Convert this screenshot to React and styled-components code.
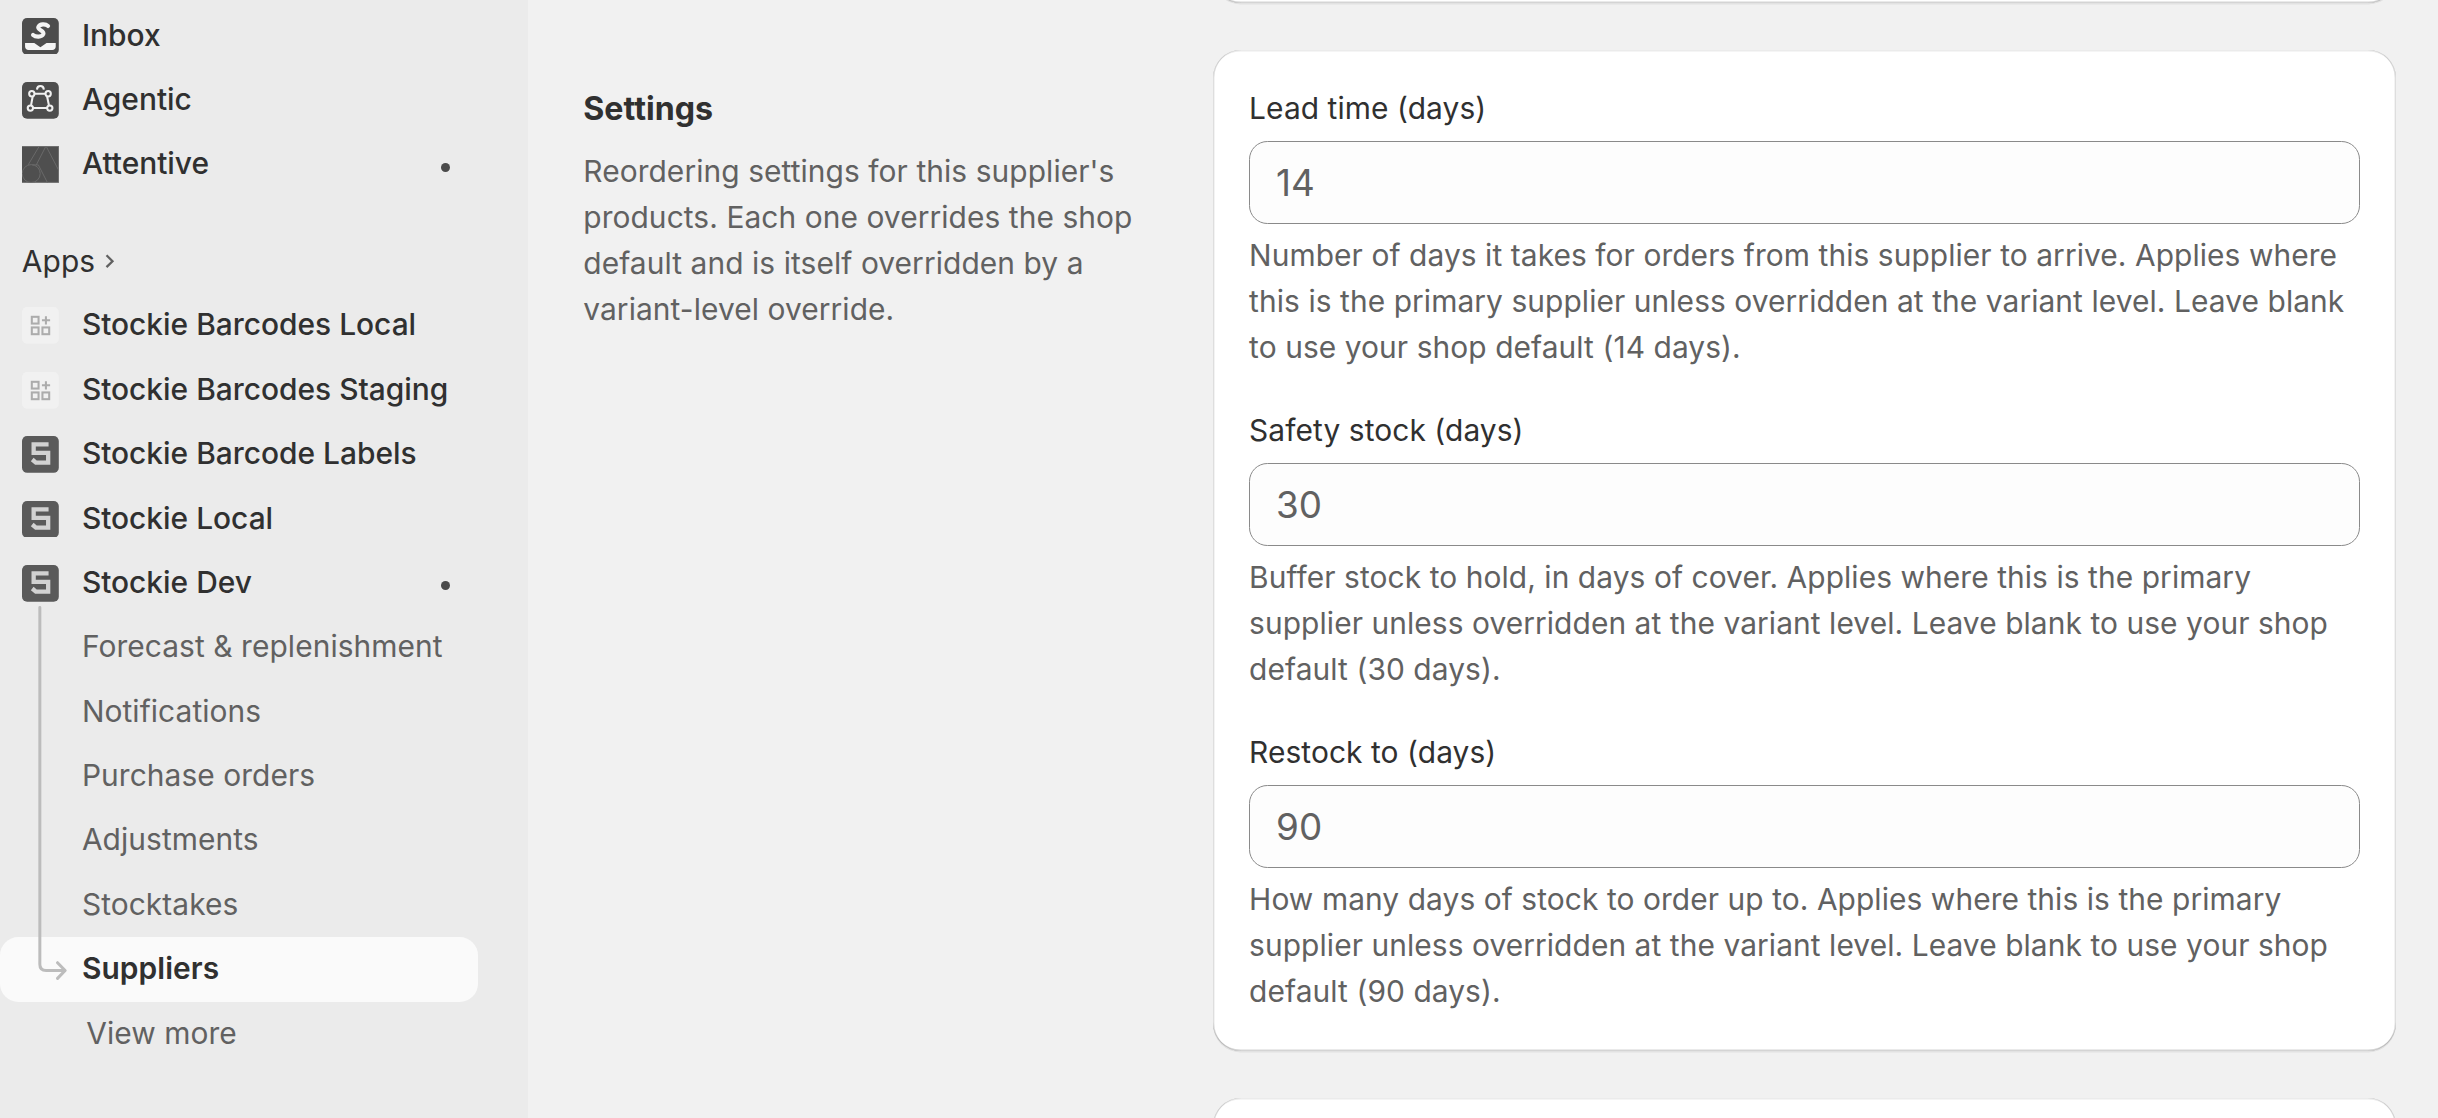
import React from "react";
import styled, { createGlobalStyle } from "styled-components";

const Global = createGlobalStyle`
  html, body { margin: 0; padding: 0; overflow: hidden; background: #f1f1f1; }
  #root { zoom: 2.3; }
  * { box-sizing: border-box; }
`;

const Page = styled.div`
  display: grid;
  grid-template-columns: 229.6px 1fr;
  width: 1060px;
  height: 486.1px;
  overflow: hidden;
  font-family: Inter, "Noto Sans", sans-serif;
  font-size: 13px;
  line-height: 20px;
  font-weight: 420;
  letter-spacing: 0.035px;
  color: #303030;
`;

const Sidebar = styled.nav`
  background: #ebebeb;
  padding-top: 1.65px;
  display: flex;
  flex-direction: column;
`;

const NavGroup = styled.div`
  display: flex;
  flex-direction: column;
`;

const AppsHeader = styled.div`
  display: flex;
  align-items: center;
  height: 28px;
  margin-top: 14px;
  padding-left: 9.5px;
  gap: 2.4px;
  color: #303030;
`;

const NavRow = styled.div`
  display: flex;
  align-items: center;
  height: 28px;
  padding-left: 9.6px;
  gap: 10px;
  width: 208px;
  font-weight: 490;
  letter-spacing: 0;
  color: #303030;
`;

const NavIcon = styled.svg`
  width: 16px;
  height: 16px;
  flex: none;
  display: block;
`;

const Label = styled.span`
  flex: 1;
  white-space: nowrap;
  padding-bottom: 1.2px;
`;

const Dot = styled.span`
  width: 3.9px;
  height: 3.9px;
  border-radius: 50%;
  background: #4a4a4a;
  margin: 2px 0 0 0;
  position: relative;
  left: -12.3px;
`;

const SubNav = styled.div`
  position: relative;
  display: flex;
  flex-direction: column;
`;

const SubRow = styled.div`
  display: flex;
  align-items: center;
  height: 28px;
  width: 208px;
  padding-left: ${(p) => (p.$more ? "37.5px" : "35.6px")};
  padding-bottom: 1.2px;
  color: ${(p) => (p.$active ? "#303030" : "#616161")};
  font-weight: ${(p) => (p.$active ? 600 : 420)};
  background: ${(p) => (p.$active ? "#fafafa" : "transparent")};
  border-radius: ${(p) => (p.$active ? "8px" : "0")};
  white-space: nowrap;
`;

const Connector = styled.svg`
  position: absolute;
  left: 15px;
  top: -4px;
  width: 16px;
  height: 164px;
`;

const Main = styled.main`
  padding: 0 18.3px 0 24px;
  background: #f1f1f1;
`;

const Card = styled.div`
  background: #fff;
  border-radius: 12px;
  padding: 15.2px 15.7px 16.1px;
  display: flex;
  flex-direction: column;
  gap: 16px;
  box-shadow:
    0 0.6px 0 rgba(26, 26, 26, 0.07),
    inset 0 -0.6px 0 rgba(0, 0, 0, 0.17),
    inset 0.6px 0 0 rgba(0, 0, 0, 0.13),
    inset -0.6px 0 0 rgba(0, 0, 0, 0.13),
    inset 0 0.6px 0 rgba(0, 0, 0, 0.08);
`;

const PrevCard = styled(Card)`
  margin-left: 273.8px;
  margin-top: -38.6px;
  height: 40px;
`;

const Section = styled.section`
  display: grid;
  grid-template-columns: 257.8px 1fr;
  column-gap: 16px;
  margin-top: 20.3px;
`;

const Intro = styled.div`
  padding-top: 15.7px;
  display: flex;
  flex-direction: column;
  gap: 7px;
`;

const Heading = styled.h2`
  margin: 0;
  font-size: 14px;
  line-height: 20px;
  font-weight: 650;
  letter-spacing: 0;
  color: #303030;
`;

const IntroText = styled.p`
  margin: 0;
  color: #616161;
  max-width: 242px;
`;

const NextCard = styled(Card)`
  height: 60px;
  margin-top: 20.3px;
`;

const NextRow = styled.div`
  display: grid;
  grid-template-columns: 257.8px 1fr;
  column-gap: 16px;
`;

const Field = styled.div`
  display: flex;
  flex-direction: column;
`;

const FieldLabel = styled.label`
  color: #303030;
  margin-bottom: 4.6px;
`;

const NumberInput = styled.input`
  display: block;
  width: 100%;
  height: 36px;
  padding: 0 11.3px;
  border: 0.66px solid #8a8a8a;
  border-radius: 8px;
  background: #fdfdfd;
  font: inherit;
  font-size: 16px;
  font-weight: 420;
  color: #616161;
  outline: none;
`;

const Help = styled.div`
  margin-top: 3.4px;
  color: #616161;
`;

const IconBg = ({ fill = "#4d4d4d", r = 5 }) => <rect width="36" height="36" rx={r} fill={fill} />;

const InboxIcon = () => (
  <NavIcon viewBox="0 0 36 36">
    <IconBg />
    <path d="M25.5 7.8c-2.5-2.2-8-2.2-9.5 .9-1.4 3 6.5 3.8 4.8 7.2-1.4 3-7.5 3-10 .7" fill="none" stroke="#f4f4f4" strokeWidth="4" strokeLinecap="round" />
    <path d="M3 24.4h9l6 4.2 6-4.2h9V28c0 2-1.4 3.4-3.4 3.4H6.4C4.4 31.4 3 30 3 28z" fill="#f4f4f4" />
  </NavIcon>
);

const AgenticIcon = () => (
  <NavIcon viewBox="0 0 36 36">
    <IconBg />
    <path d="M12 11.5h11M10.5 14l-1.6 8.5M24.5 14l1.8 8.5M11 25.5h13.5" stroke="#f0f0f0" strokeWidth="2" fill="none" />
    <circle cx="9.6" cy="11.5" r="2.6" fill="none" stroke="#f0f0f0" strokeWidth="2" />
    <circle cx="25.6" cy="11.5" r="2.6" fill="none" stroke="#f0f0f0" strokeWidth="2" />
    <circle cx="8.2" cy="25.5" r="2.6" fill="none" stroke="#f0f0f0" strokeWidth="2" />
    <circle cx="27.2" cy="25.5" r="2.6" fill="none" stroke="#f0f0f0" strokeWidth="2" />
    <path d="M14.6 7.4c.4-4.6 6.4-4.6 6.8 0" fill="none" stroke="#f0f0f0" strokeWidth="2" />
  </NavIcon>
);

const AttentiveIcon = () => (
  <NavIcon viewBox="0 0 36 36">
    <rect width="36" height="36" fill="#4f4f4f" />
    <path d="M0 .4h36M0 35.6h36" stroke="#7a7a7a" strokeWidth=".8" />
    <path d="M6 18.5 17 0h6.5L36 24M14 18.5 23.5 0M10 18.5h6l9 17.5" fill="none" stroke="#6c6c6c" strokeWidth=".9" />
    <circle cx="9" cy="27" r="8.8" fill="none" stroke="#6c6c6c" strokeWidth=".9" />
  </NavIcon>
);

const GridIcon = () => (
  <NavIcon viewBox="0 0 36 36">
    <IconBg fill="#f1f1f1" />
    <g fill="none" stroke="#acacac" strokeWidth="2">
      <rect x="9.6" y="9.6" width="6.6" height="6.6" />
      <rect x="9.6" y="20" width="6.6" height="6.6" />
      <rect x="20" y="20" width="6.6" height="6.6" />
      <path d="M23.4 9v8M19.5 13h8" />
    </g>
  </NavIcon>
);

const StockieIcon = () => (
  <NavIcon viewBox="0 0 36 36">
    <IconBg fill="#5a5a5a" />
    <path d="M26 8.2H11.4v8.4h14.2V26H13.6L10 23" fill="none" stroke="#d2d2d2" strokeWidth="4.2" />
  </NavIcon>
);

const fields = [
  {
    label: "Lead time (days)",
    value: "14",
    help: "Number of days it takes for orders from this supplier to arrive. Applies where this is the primary supplier unless overridden at the variant level. Leave blank to use your shop default (14 days).",
  },
  {
    label: "Safety stock (days)",
    value: "30",
    help: "Buffer stock to hold, in days of cover. Applies where this is the primary supplier unless overridden at the variant level. Leave blank to use your shop default (30 days).",
  },
  {
    label: "Restock to (days)",
    value: "90",
    help: "How many days of stock to order up to. Applies where this is the primary supplier unless overridden at the variant level. Leave blank to use your shop default (90 days).",
  },
];

export default function App() {
  return (
    <>
      <Global />
      <Page>
        <Sidebar>
          <NavGroup>
            <NavRow><InboxIcon /><Label>Inbox</Label></NavRow>
            <NavRow><AgenticIcon /><Label>Agentic</Label></NavRow>
            <NavRow><AttentiveIcon /><Label>Attentive</Label><Dot /></NavRow>
          </NavGroup>
          <AppsHeader>
            Apps
            <svg width="8" height="8" viewBox="0 0 8 8">
              <path d="M2.4 1.4 5 4 2.4 6.6" fill="none" stroke="#616161" strokeWidth="1" />
            </svg>
          </AppsHeader>
          <NavGroup>
            <NavRow><GridIcon /><Label>Stockie Barcodes Local</Label></NavRow>
            <NavRow><GridIcon /><Label>Stockie Barcodes Staging</Label></NavRow>
            <NavRow><StockieIcon /><Label>Stockie Barcode Labels</Label></NavRow>
            <NavRow><StockieIcon /><Label>Stockie Local</Label></NavRow>
            <NavRow><StockieIcon /><Label>Stockie Dev</Label><Dot /></NavRow>
          </NavGroup>
          <SubNav>
            <SubRow>Forecast &amp; replenishment</SubRow>
            <SubRow>Notifications</SubRow>
            <SubRow>Purchase orders</SubRow>
            <SubRow>Adjustments</SubRow>
            <SubRow>Stocktakes</SubRow>
            <SubRow $active>Suppliers</SubRow>
            <SubRow $more>View more</SubRow>
            <Connector viewBox="0 0 16 164">
              <path d="M2.1 0.7V155.8q0 2.7 2.7 2.7H13M9.8 155.1 13.1 158.5 9.8 161.9" fill="none" stroke="#bcbcbc" strokeWidth="1.3" strokeLinecap="round" strokeLinejoin="round" />
            </Connector>
          </SubNav>
        </Sidebar>
        <Main>
          <PrevCard />
          <Section>
            <Intro>
              <Heading>Settings</Heading>
              <IntroText>
                Reordering settings for this supplier's products. Each one overrides the shop default and is itself overridden by a variant-level override.
              </IntroText>
            </Intro>
            <Card>
              {fields.map((f) => (
                <Field key={f.label}>
                  <FieldLabel>{f.label}</FieldLabel>
                  <NumberInput type="text" defaultValue={f.value} />
                  <Help>{f.help}</Help>
                </Field>
              ))}
            </Card>
          </Section>
          <NextRow>
            <div />
            <NextCard />
          </NextRow>
        </Main>
      </Page>
    </>
  );
}
